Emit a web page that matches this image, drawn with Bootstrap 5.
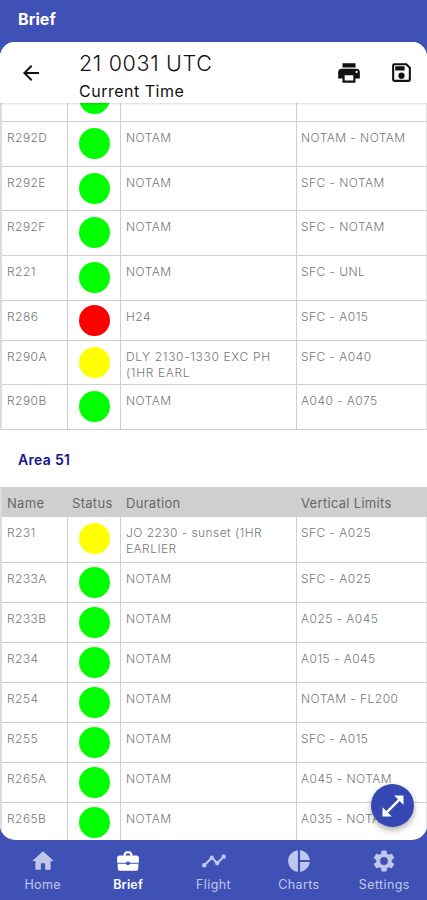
<!DOCTYPE html>
<html lang="en">
<head>
<meta charset="utf-8">
<meta name="viewport" content="width=device-width, initial-scale=1">
<title>Brief</title>
<link href="https://cdn.jsdelivr.net/npm/bootstrap@5.3.0/dist/css/bootstrap.min.css" rel="stylesheet">
<style>
body{font-family:Inter,"Open Sans",sans-serif;background:#3f51b5;height:900px;overflow:hidden}
.app-title{height:42px;padding:8px 18px 0;font-size:16px;line-height:22px;letter-spacing:.1px}
.sheet{height:798px;border-radius:15px}
.sheet-head{height:61px;padding:0 13px 0 19px;color:#111;box-shadow:0 1px 2px #0002;z-index:1}
.clock{margin-left:36px;padding-top:7px}
.clock-main{font-size:21.5px;line-height:28px;letter-spacing:.65px;font-weight:300}
.clock-sub{font-size:16px;line-height:24px;letter-spacing:.5px;padding-top:2px}
.tool-gap{gap:27px}
.areas{table-layout:fixed;border-collapse:separate;border-spacing:0;font-size:12px;line-height:16px;margin:0;border-left:2px solid #dcdcdc}
.areas.scrolled{margin-top:-26px}
.areas td{height:45px;padding:7.500px 4px 0 5px;color:#777;border-right:1px solid #cfcfcf;border-bottom:1px solid #cfcfcf;font-weight:300;letter-spacing:.45px;vertical-align:top}
.areas td:nth-child(2){padding:6px 0 0}
.areas td:last-child{border-right-color:#e4e4e4;padding-left:4px}
.areas .wide{letter-spacing:.65px}
.areas .h44 td{height:44px}.areas .h46 td{height:46px}
.areas .h40 td{height:40px}
.areas .h40 td:nth-child(2){padding-top:4px}
.areas th{height:30px;padding:2px 4px 0 5px;background:#cfcfcf;color:#666;font-size:13px;font-weight:400;letter-spacing:.3px;vertical-align:middle;border:0}
.areas th:nth-child(2){padding-left:4px}
.areas th:last-child{padding-left:4px}
.dot{width:31px;height:31px;margin:0 auto;border-radius:50%;background:#0f0}
.dot.closed{background:#f00}.dot.caution{background:#ff0}
.area-name{height:57px;padding:20px 18px 0;color:#14148c;font-size:14px;line-height:20px;font-weight:600;letter-spacing:.3px;margin:0}
.fab{right:13px;bottom:13px;width:43px;height:43px;background:#3648b3;box-shadow:0 3px 6px #0005}
.tabs{height:60px;padding:8px 0 0;color:#c0c7ec;font-size:12.5px;line-height:18px;letter-spacing:.4px}
.tabs svg{display:block;margin:0 auto 2px}
.tabs a{color:inherit}.tabs a.active{color:#fff;font-weight:600;letter-spacing:.2px}
</style>
<script src="https://cdn.jsdelivr.net/npm/bootstrap@5.3.0/dist/js/bootstrap.bundle.min.js"></script>
</head>
<body>
<header class="app-title text-white fw-bold">Brief</header>
<main class="sheet bg-white position-relative overflow-hidden d-flex flex-column">
  <div class="sheet-head bg-white position-relative d-flex flex-shrink-0">
    <svg class="align-self-center" width="24" height="24" viewBox="0 0 24 24" fill="currentColor"><path d="M20 11H7.8l5.6-5.6L12 4l-8 8 8 8 1.4-1.4L7.8 13H20z"/></svg>
    <div class="clock flex-grow-1 d-flex flex-column justify-content-center">
      <div class="clock-main"><span>21 0031 UTC</span></div>
      <div class="clock-sub"><span>Current Time</span></div>
    </div>
    <div class="tool-gap d-flex align-items-center">
      <svg width="26" height="26" viewBox="0 0 24 24" fill="currentColor"><path d="M19 8H5c-1.7 0-3 1.3-3 3v6h4v4h12v-4h4v-6c0-1.700-1.300-3-3-3zm-3 11H8v-5h8zm3-7a1 1 0 1 1 0-2 1 1 0 0 1 0 2zM18 3H6v4h12z"/></svg>
      <svg width="25" height="25" viewBox="0 0 24 24" fill="currentColor"><path d="M17 3H5a2 2 0 0 0-2 2v14a2 2 0 0 0 2 2h14a2 2 0 0 0 2-2V7zm2 16H5V5h11.200L19 7.800zM12 12a3 3 0 1 0 0 6 3 3 0 0 0 0-6zM6 6h9v4H6z"/></svg>
    </div>
  </div>
  <div class="flex-grow-1 overflow-hidden">
    <table class="areas scrolled w-100">
      <colgroup><col style="width:66px"><col style="width:53px"><col style="width:176px"><col></colgroup>
      <tbody>
        <tr><td></td><td><div class="dot"></div></td><td></td><td></td></tr>
        <tr><td>R292D</td><td><div class="dot"></div></td><td>NOTAM</td><td>NOTAM - NOTAM</td></tr>
        <tr class="h44"><td>R292E</td><td><div class="dot"></div></td><td>NOTAM</td><td>SFC - NOTAM</td></tr>
        <tr><td>R292F</td><td><div class="dot"></div></td><td>NOTAM</td><td>SFC - NOTAM</td></tr>
        <tr><td>R221</td><td><div class="dot"></div></td><td>NOTAM</td><td>SFC - UNL</td></tr>
        <tr class="h40"><td>R286</td><td><div class="dot closed"></div></td><td>H24</td><td>SFC - A015</td></tr>
        <tr class="h44"><td>R290A</td><td><div class="dot caution"></div></td><td class="wide">DLY 2130-1330 EXC PH<br>(1HR EARL</td><td>SFC - A040</td></tr>
        <tr><td>R290B</td><td><div class="dot"></div></td><td>NOTAM</td><td>A040 - A075</td></tr>
      </tbody>
    </table>
    <h2 class="area-name">Area 51</h2>
    <table class="areas w-100">
      <colgroup><col style="width:66px"><col style="width:53px"><col style="width:176px"><col></colgroup>
      <thead><tr><th>Name</th><th>Status</th><th>Duration</th><th>Vertical Limits</th></tr></thead>
      <tbody>
        <tr class="h46"><td>R231</td><td><div class="dot caution"></div></td><td>JO 2230 - sunset (1HR<br>EARLIER</td><td>SFC - A025</td></tr>
        <tr class="h40"><td>R233A</td><td><div class="dot"></div></td><td>NOTAM</td><td>SFC - A025</td></tr>
        <tr class="h40"><td>R233B</td><td><div class="dot"></div></td><td>NOTAM</td><td>A025 - A045</td></tr>
        <tr class="h40"><td>R234</td><td><div class="dot"></div></td><td>NOTAM</td><td>A015 - A045</td></tr>
        <tr class="h40"><td>R254</td><td><div class="dot"></div></td><td>NOTAM</td><td>NOTAM - FL200</td></tr>
        <tr class="h40"><td>R255</td><td><div class="dot"></div></td><td>NOTAM</td><td>SFC - A015</td></tr>
        <tr class="h40"><td>R265A</td><td><div class="dot"></div></td><td>NOTAM</td><td>A045 - NOTAM</td></tr>
        <tr class="h40"><td>R265B</td><td><div class="dot"></div></td><td>NOTAM</td><td>A035 - NOTAM</td></tr>
      </tbody>
    </table>
  </div>
  <button class="fab btn p-0 border-0 rounded-circle position-absolute d-flex align-items-center justify-content-center text-white" aria-label="Expand">
    <svg width="28" height="28" viewBox="0 0 24 24" fill="currentColor"><path d="M21 11V3h-8l3.290 3.290-10 10L3 13v8h8l-3.290-3.290 10-10z"/></svg>
  </button>
</main>
<nav class="tabs row g-0 text-center">
  <a class="col text-decoration-none" href="#"><svg width="26" height="26" viewBox="0 0 24 24" fill="currentColor"><path d="M10 20v-6h4v6h5v-8h3L12 3 2 12h3v8z"/></svg>Home</a>
  <a class="col text-decoration-none active" href="#"><svg width="26" height="26" viewBox="0 0 24 24" fill="currentColor"><path fill-rule="evenodd" d="M20 7h-4V5l-2-2h-4L8 5v2H4a2 2 0 0 0-2 2v4.500h8.200a2 2 0 0 1 3.600 0H22V9a2 2 0 0 0-2-2zm-6 0h-4V5h4zM2.500 14.500V19a2 2 0 0 0 2 2h15a2 2 0 0 0 2-2v-4.500h-7.600a2 2 0 0 1-3.800 0z"/></svg>Brief</a>
  <a class="col text-decoration-none" href="#"><svg width="26" height="26" viewBox="0 0 24 24" fill="currentColor"><path d="M23 8a2 2 0 0 1-2.510 1.930l-3.560 3.550A2 2 0 1 1 13.070 13.480l-2.550-2.550a2 2 0 0 1-1.040 0l-4.550 4.560A2 2 0 1 1 3.510 14.070l4.560-4.550a2 2 0 1 1 3.860 0l2.550 2.550a2 2 0 0 1 1.040 0l3.550-3.560A2 2 0 1 1 23 8z"/></svg>Flight</a>
  <a class="col text-decoration-none" href="#"><svg width="26" height="26" viewBox="0 0 24 24" fill="currentColor"><path d="M11 2v20C5.900 21.500 2 17.200 2 12s3.900-9.500 9-10zm2 0v9h9c-.5-4.700-4.200-8.500-9-9zm0 11v9c4.700-.5 8.500-4.200 9-9z"/></svg>Charts</a>
  <a class="col text-decoration-none" href="#"><svg width="26" height="26" viewBox="0 0 24 24" fill="currentColor"><path d="M19.140 12.940a7 7 0 0 0 0-1.880l2.030-1.580a.5.5 0 0 0 .12-.61l-1.920-3.320a.5.5 0 0 0-.59-.22l-2.390.96a7 7 0 0 0-1.620-.94l-.36-2.540a.5.5 0 0 0-.48-.41h-3.840a.5.5 0 0 0-.47.410l-.36 2.540a7.400 7.400 0 0 0-1.620.94l-2.390-.96a.5.500 0 0 0-.59.220L2.740 8.870a.5.5 0 0 0 .12.610l2.030 1.580a7 7 0 0 0 0 1.880l-2.030 1.580a.5.5 0 0 0-.12.610l1.920 3.320c.12.220.37.290.59.220l2.390-.96c.5.380 1.030.700 1.620.94l.36 2.540c.05.240.24.410.48.410h3.840c.24 0 .44-.17.470-.41l.36-2.540a7 7 0 0 0 1.620-.94l2.390.96c.22.080.47 0 .59-.22l1.920-3.320a.5.5 0 0 0-.12-.61zM12 15.600a3.600 3.600 0 1 1 0-7.200 3.600 3.600 0 0 1 0 7.200z"/></svg>Settings</a>
</nav>
</body>
</html>
